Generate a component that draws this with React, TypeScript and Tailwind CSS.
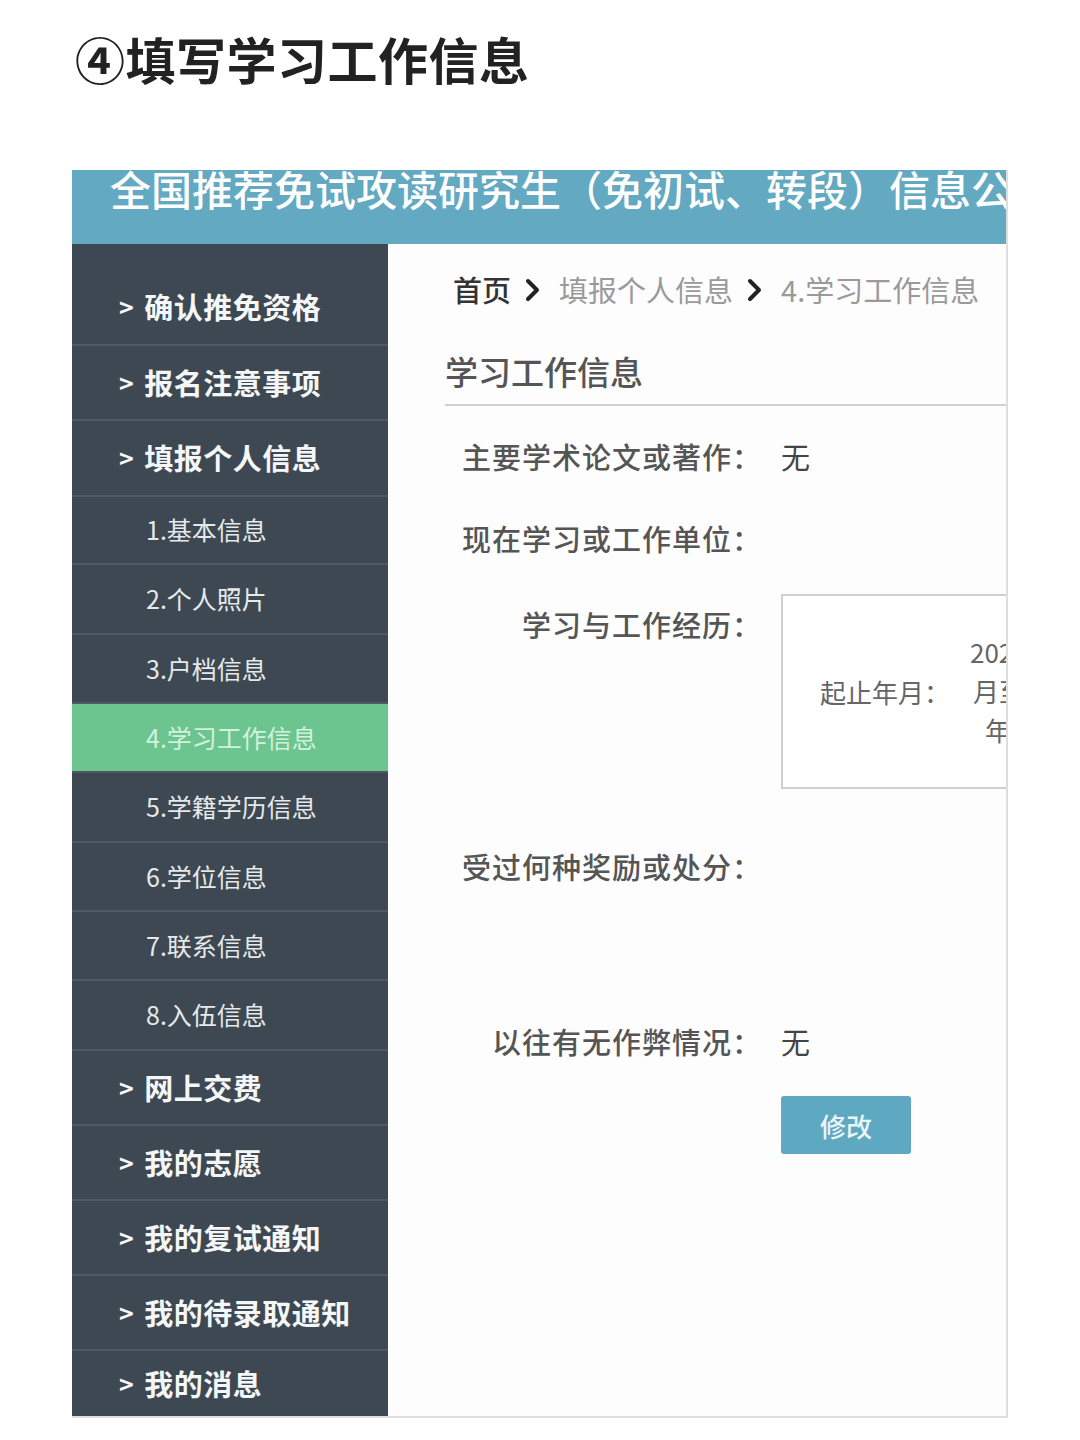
const font = { fontFamily: '"Noto Sans CJK SC", "Noto Sans", sans-serif' }

type NavItem = { label: string; main: boolean; active?: boolean; h: string }

const nav: NavItem[] = [
  { label: '确认推免资格', main: true, h: 'h-[100px] pt-[26px]' },
  { label: '报名注意事项', main: true, h: 'h-[75px]' },
  { label: '填报个人信息', main: true, h: 'h-[76px]' },
  { label: '1.基本信息', main: false, h: 'h-[68px]' },
  { label: '2.个人照片', main: false, h: 'h-[70px]' },
  { label: '3.户档信息', main: false, h: 'h-[69px]' },
  { label: '4.学习工作信息', main: false, active: true, h: 'h-[69px]' },
  { label: '5.学籍学历信息', main: false, h: 'h-[70px]' },
  { label: '6.学位信息', main: false, h: 'h-[69px]' },
  { label: '7.联系信息', main: false, h: 'h-[69px]' },
  { label: '8.入伍信息', main: false, h: 'h-[70px]' },
  { label: '网上交费', main: true, h: 'h-[75px]' },
  { label: '我的志愿', main: true, h: 'h-[75px]' },
  { label: '我的复试通知', main: true, h: 'h-[75px]' },
  { label: '我的待录取通知', main: true, h: 'h-[75px]' },
  { label: '我的消息', main: true, h: 'h-[67px]' },
]

function Chevron() {
  return (
    <svg width="16" height="26" viewBox="0 0 16 26" className="ml-[14px] mr-[18px] shrink-0">
      <path d="M3 4 L12 13 L3 22" fill="none" stroke="#222" strokeWidth="4" strokeLinecap="round" strokeLinejoin="round" />
    </svg>
  )
}

export default function App() {
  return (
    <div className="w-[1080px] h-[1440px] bg-white overflow-hidden" style={font}>
      <h1 className="pl-[75px] pt-[28px] text-[50px] leading-[60px] font-bold text-[#222] tracking-[0.5px]">④填写学习工作信息</h1>

      <div className="ml-[72px] mt-[82px] w-[936px] h-[1248px] border-r-2 border-b-2 border-[#dedede] overflow-hidden flex flex-col">
        {/* header band */}
        <div className="h-[74px] bg-[#62a9c1] overflow-hidden shrink-0">
          <div className="pl-[38px] -mt-[6px] text-[41px] leading-[48px] font-medium text-white whitespace-nowrap">
            全国推荐免试攻读研究生（免初试、转段）信息公开
          </div>
        </div>

        <div className="flex flex-1 min-h-0">
          {/* sidebar */}
          <div className="w-[316px] shrink-0 bg-[#3d4852] flex flex-col">
            {nav.map((item, i) => (
              <div
                key={item.label}
                className={`${item.h} flex items-center ${i > 0 ? 'border-t-2 border-[#4d5963]' : ''} ${item.active ? 'bg-[#6cc48e]' : ''}`}
              >
                {item.main ? (
                  <div className="pl-[47px] flex items-center text-[29px] font-bold text-[#f4f6f7] tracking-[0.5px]">
                    <span className="text-[25px] mr-[10px]">&gt;</span>
                    {item.label}
                  </div>
                ) : (
                  <div className={`pl-[74px] text-[25px] ${item.active ? 'text-[#d2f2dd]' : 'text-[#e6e9eb]'}`}>{item.label}</div>
                )}
              </div>
            ))}
          </div>

          {/* content */}
          <div className="flex-1 min-w-0 bg-[#fdfdfd] pl-[57px] overflow-hidden">
            <div className="flex items-center pl-[8px] mt-[26px] h-[40px] text-[29px] whitespace-nowrap">
              <span className="text-[#333] font-medium">首页</span>
              <Chevron />
              <span className="text-[#9a9a9a]">填报个人信息</span>
              <Chevron />
              <span className="text-[#9a9a9a]">4.学习工作信息</span>
            </div>

            <div className="mt-[36px] h-[60px] border-b-2 border-[#d0d0d0] text-[33px] leading-[50px] font-medium text-[#555]">学习工作信息</div>

            <div className="flex flex-col text-[29px] tracking-[1px] text-[#555] whitespace-nowrap">
              <div className="mt-[31px] flex h-[40px] items-center">
                <div className="w-[317px] shrink-0 text-right font-medium">主要学术论文或著作：</div>
                <div className="ml-[19px] text-[#444]">无</div>
              </div>

              <div className="mt-[42px] flex h-[40px] items-center">
                <div className="w-[317px] shrink-0 text-right font-medium">现在学习或工作单位：</div>
              </div>

              <div className="mt-[35px] flex h-[195px]">
                <div className="w-[317px] shrink-0 text-right font-medium pt-[10px] leading-[40px]">学习与工作经历：</div>
                <div className="ml-[19px] w-[420px] shrink-0 border-2 border-[#cfcfcf] bg-white flex items-center tracking-normal">
                  <div className="pl-[37px] text-[26px] text-[#666] w-[187px] shrink-0">起止年月：</div>
                  <div className="text-[26px] leading-[39px] text-[#666] -mt-[3px]">
                    <div>2020年9</div>
                    <div className="ml-[3px]">月至2024</div>
                    <div className="ml-[15px]">年6月</div>
                  </div>
                </div>
              </div>

              <div className="mt-[58px] flex h-[40px] items-center">
                <div className="w-[317px] shrink-0 text-right font-medium">受过何种奖励或处分：</div>
              </div>

              <div className="mt-[135px] flex h-[40px] items-center">
                <div className="w-[317px] shrink-0 text-right font-medium">以往有无作弊情况：</div>
                <div className="ml-[19px] text-[#444]">无</div>
              </div>

              <div className="mt-[34px] pl-[336px]">
                <button className="w-[130px] h-[58px] rounded-[3px] bg-[#5ea8c1] text-[26px] text-[#eaf5f8] font-medium tracking-normal">修改</button>
              </div>
            </div>
          </div>
        </div>
      </div>
    </div>
  )
}
